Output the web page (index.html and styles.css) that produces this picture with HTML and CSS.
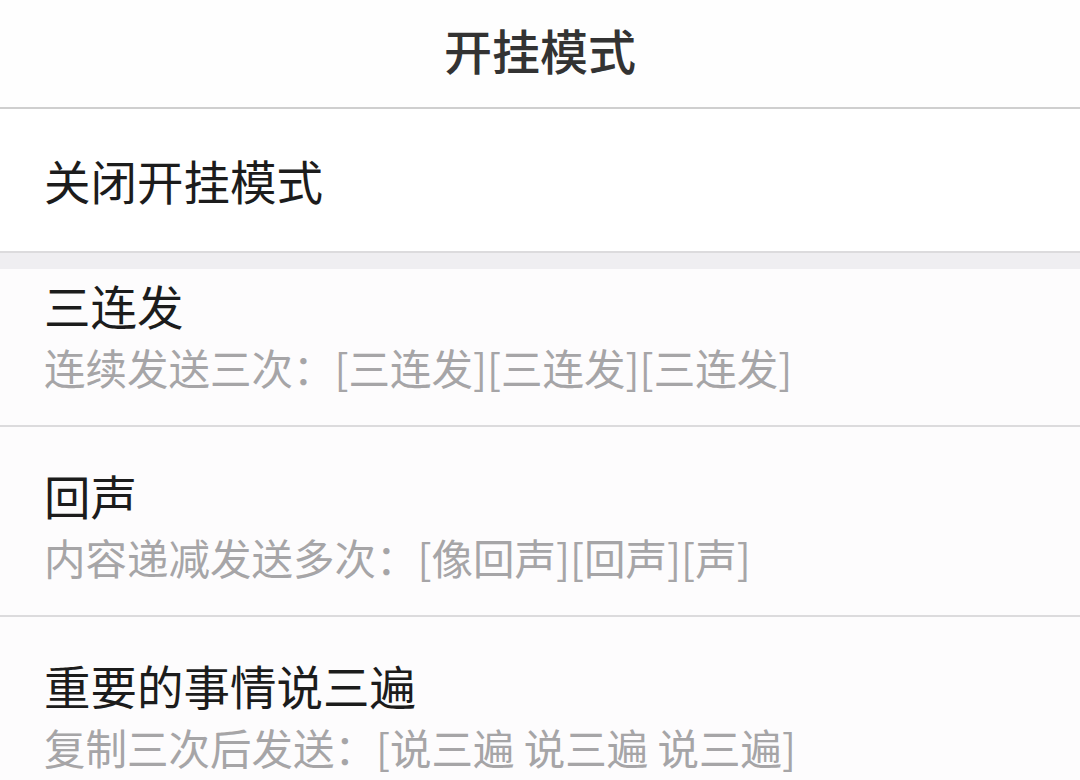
FILE: index.html
```html
<!DOCTYPE html>
<html lang="zh-CN">
<head>
<meta charset="utf-8">
<title>开挂模式</title>
<link rel="stylesheet" href="styles.css">
</head>
<body>
<header class="nav">
  <h1 class="nav-title">开挂模式</h1>
</header>
<main class="list">
  <div class="item item-single">
    <div class="item-title">关闭开挂模式</div>
  </div>
  <div class="gap"></div>
  <div class="item item-first">
    <div class="item-title">三连发</div>
    <div class="item-sub">连续发送三次：[三连发][三连发][三连发]</div>
  </div>
  <div class="item">
    <div class="item-title">回声</div>
    <div class="item-sub">内容递减发送多次：[像回声][回声][声]</div>
  </div>
  <div class="item">
    <div class="item-title">重要的事情说三遍</div>
    <div class="item-sub">复制三次后发送：[说三遍 说三遍 说三遍]</div>
  </div>
</main>
</body>
</html>
```
FILE: styles.css
```css
html, body {
  margin: 0;
  padding: 0;
  background: #fdfcfd;
  font-family: "Noto Sans CJK SC", "Noto Sans", sans-serif;
  overflow: hidden;
}

.nav {
  display: flex;
  align-items: center;
  justify-content: center;
  border-bottom: 2px solid #cfcfcf;
  background: #fefefe;
  box-sizing: border-box;
  height: 109px;
}

.nav-title {
  margin: 0;
  font-size: 48px;
  line-height: 56px;
  font-weight: 500;
  color: #333333;
  padding-bottom: 10px;
}

.list {
  display: flex;
  flex-direction: column;
}

.item {
  padding: 40px 20px 33px 44px;
  border-bottom: 2px solid #dcdbdd;
  display: flex;
  flex-direction: column;
  gap: 9px;
}

.item-single {
  padding-top: 43px;
  padding-bottom: 43px;
  background: #ffffff;
}

.item-first {
  padding-top: 8px;
}

.gap {
  height: 16px;
  background: #efeef1;
}

.item-title {
  font-size: 46.5px;
  line-height: 56px;
  color: #1c1c1c;
}

.item-sub {
  font-size: 41.5px;
  line-height: 50px;
  color: #a6a5a7;
  white-space: nowrap;
}
```
